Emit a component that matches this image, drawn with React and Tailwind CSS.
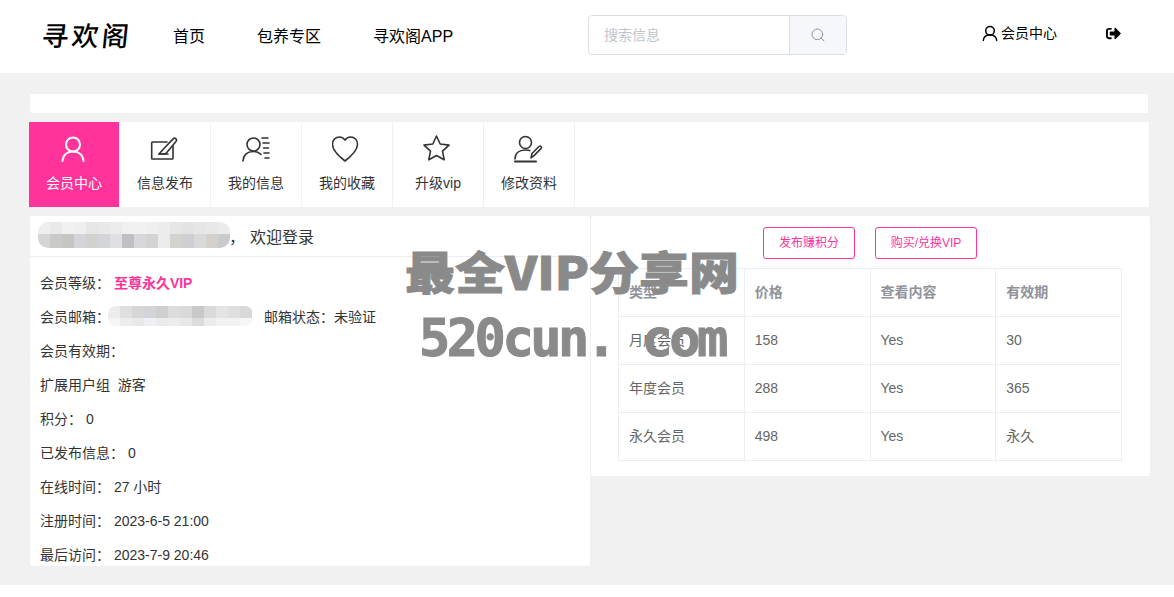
import { Search } from 'lucide-react';
import { FaSignOutAlt } from 'react-icons/fa';

const iconProps = { fill: 'none', stroke: 'currentColor', strokeWidth: 1.6, strokeLinecap: 'round', strokeLinejoin: 'round' };

const UserIcon = () => (
    <svg width="30" height="30" viewBox="0 0 30 30" {...iconProps} strokeWidth="2">
        <circle cx="14" cy="9.500" r="7" />
        <path d="M3.500 26c.5-6 4.500-9.500 10.500-9.500S24 20 24.500 26" />
    </svg>
);

const PostIcon = () => (
    <svg width="30" height="30" viewBox="0 0 30 30" {...iconProps}>
        <path d="M17 7H2.500a.8.800 0 0 0-.8.800v15.400a.8.800 0 0 0 .8.800h19.700a.8.800 0 0 0 .8-.8V11" />
        <path d="M9 19h6.500L26 6.500c.8-1 .7-2-.2-2.800-.9-.8-1.900-.7-2.700.2L13 14.500z" />
        <path d="M9 19h9" />
    </svg>
);

const InfoIcon = () => (
    <svg width="30" height="30" viewBox="0 0 30 30" {...iconProps}>
        <circle cx="12.500" cy="9.500" r="6.500" />
        <path d="M2 26c.5-6 4.500-9.500 10.500-9.500 3 0 5.500 1 7.500 2.800" />
        <path d="M21 3h6M22 8h6M22.500 13h5M23 18h5M24 23h4" />
    </svg>
);

const HeartIcon = () => (
    <svg width="30" height="30" viewBox="0 0 30 30" {...iconProps}>
        <path d="M13 26C6 20.500.5 15.500.5 9.500.5 5 3.500 2 7.500 2c2.500 0 4.300 1.200 5.500 3.200C14.200 3.200 16 2 18.500 2c4 0 7 3 7 7.500C25.500 15.500 20 20.500 13 26z" />
    </svg>
);

const StarIcon = () => (
    <svg width="30" height="30" viewBox="0 0 30 30" {...iconProps}>
        <path d="M13.500 1l3.700 8 8.800 1.100-6.500 6 1.700 8.700-7.700-4.300-7.700 4.300 1.700-8.700-6.500-6L9.800 9z" />
    </svg>
);

const EditUserIcon = () => (
    <svg width="30" height="30" viewBox="0 0 30 30" {...iconProps}>
        <circle cx="11.500" cy="7.500" r="6" />
        <path d="M1 24c0-5.500 4-9 10.500-9 1.500 0 3 .2 4.300.6" />
        <path d="M1 26.500h21" strokeWidth="2" />
        <path d="M17 23l1-4.500 7-7c.7-.7 1.500-.7 2.100 0 .6.600.6 1.400-.1 2.100l-7 7z" />
    </svg>
);

const tabs = [
    { label: '会员中心', Icon: UserIcon, active: true },
    { label: '信息发布', Icon: PostIcon },
    { label: '我的信息', Icon: InfoIcon },
    { label: '我的收藏', Icon: HeartIcon },
    { label: '升级vip', Icon: StarIcon },
    { label: '修改资料', Icon: EditUserIcon },
];

const plans = [
    ['月度会员', '158', 'Yes', '30'],
    ['年度会员', '288', 'Yes', '365'],
    ['永久会员', '498', 'Yes', '永久'],
];

const nameTop = ['#eeeeee', '#e9e9e9', '#f1f1f1', '#efefef', '#e6e6e4', '#e9e9e9', '#ebebeb', '#f0f0f0', '#f1f1f1', '#efefef', '#ececec', '#e5e6e8', '#e3e3e3', '#e6e6e6', '#e8e8e8', '#ebebeb'];
const nameBottom = ['#d5d5d5', '#c9c9c7', '#c5c5c3', '#d4d4d9', '#d3d1cd', '#d3d5d8', '#dfe0e2', '#c0c0c2', '#d8d8da', '#d4d3d3', '#ebebeb', '#d3d2cf', '#cfcfd3', '#d8d9db', '#d4d1cd', '#c9cacd'];
const mailTop = ['#ececec', '#dfdfdf', '#d6d6d6', '#d2d4da', '#d0cfd0', '#dcdcdc', '#d9d9d9', '#c9c9cb', '#d9dbdb', '#e4e4e4', '#dfdfdf', '#d8d8d8'];
const mailBottom = ['#f5f5f5', '#ededed', '#e9e9e9', '#eeeff2', '#eaeaea', '#ededed', '#e8e8e8', '#dcdcdd', '#ececed', '#f2f2f2', '#f2f2f2', '#f7f7f7'];

const Mosaic = ({ top, bottom, className }) => (
    <div className={`absolute flex flex-col overflow-hidden ${className}`}>
        <div className="flex h-[12px] shrink-0">
            {top.map((c, i) => <div key={i} className="w-[12px] shrink-0" style={{ backgroundColor: c }} />)}
        </div>
        <div className="flex flex-1">
            {bottom.map((c, i) => <div key={i} className="w-[12px] shrink-0" style={{ backgroundColor: c }} />)}
        </div>
    </div>
);

const Row = ({ children }) => <div className="h-[34px] flex items-center whitespace-pre">{children}</div>;

const App = () => {
    return (
        <div className="relative h-[597px] overflow-hidden bg-white text-[14px] text-[#333] font-['Liberation_Sans','Noto_Sans_CJK_SC',sans-serif]">
            <header className="h-[73px] flex items-center pl-[42px] text-black">
                <div className="w-[131px] -mt-[5px] text-[27px] leading-none tracking-[3px] font-medium font-['Noto_Sans_CJK_JP',sans-serif] -skew-x-6 whitespace-nowrap">寻欢阁</div>
                <nav className="flex gap-[52px] text-[16px]">
                    <span>首页</span>
                    <span>包养专区</span>
                    <span>寻欢阁APP</span>
                </nav>
                <div className="ml-[135px] w-[259px] h-[40px] -mt-[3px] flex border border-[#dcdfe6] rounded-[4px] overflow-hidden">
                    <div className="flex-1 flex items-center pl-[15px] text-[14px] text-[#c0c4cc]">搜索信息</div>
                    <div className="w-[57px] bg-[#f5f7fa] border-l border-[#dcdfe6] flex items-center justify-center text-[#909399]">
                        <Search size={16} strokeWidth={1.5} />
                    </div>
                </div>
                <div className="ml-[135px] flex items-center -mt-[6px]">
                    <svg width="16" height="17" viewBox="0 0 30 30" {...iconProps} strokeWidth="2.800">
                        <circle cx="15" cy="10" r="8" />
                        <path d="M2.500 28c.5-6 5-10 12.500-10s12 4 12.500 10" />
                    </svg>
                    <span className="ml-[3px]">会员中心</span>
                </div>
                <FaSignOutAlt size={15} className="ml-[49px] -mt-[6px]" />
            </header>

            <main className="h-[512px] bg-[#f1f1f1] pt-[20px] pl-[29px] pr-[24px]">
                <div className="w-[1120px] h-[21px] bg-white rounded-[3px] border border-[#eeeff5]" />

                <div className="mt-[8px] w-[1120px] h-[85px] bg-white flex">
                    {tabs.map(({ label, Icon, active }) => (
                        <div
                            key={label}
                            className={`w-[91px] flex flex-col items-center pt-[13px] border-r border-[#f1f1f1] ${active ? 'bg-[#ff3399] text-white' : 'text-[#333]'}`}
                        >
                            <Icon />
                            <span className="mt-[8px] leading-[20px]">{label}</span>
                        </div>
                    ))}
                </div>

                <div className="mt-[8px] flex items-start w-[1122px]">
                    <section className="relative shrink-0 w-[562px] h-[352px] overflow-hidden bg-white rounded-[3px] border border-[#eeeff5]">
                        <div className="h-[41px] flex items-center border-b border-[#eeeff5] pt-[3px] pl-[199px] text-[16px] whitespace-pre">
                            <span>，</span>
                            <span className="ml-[5px]">欢迎登录</span>
                        </div>
                        <div className="pt-[9px] pl-[10px]">
                            <Row>会员等级： <b className="text-[#ff3399]">至尊永久VIP</b></Row>
                            <Row>
                                会员邮箱：
                                <span className="ml-[154px]">邮箱状态：未验证</span>
                            </Row>
                            <Row>会员有效期：</Row>
                            <Row>扩展用户组  游客</Row>
                            <Row>积分： 0</Row>
                            <Row>已发布信息： 0</Row>
                            <Row>在线时间： 27 小时</Row>
                            <Row>注册时间： 2023-6-5 21:00</Row>
                            <Row>最后访问： 2023-7-9 20:46</Row>
                        </div>
                        <Mosaic top={nameTop} bottom={nameBottom} className="left-[8px] top-[6px] w-[192px] h-[26px] rounded-[10px]" />
                        <Mosaic top={mailTop} bottom={mailBottom} className="left-[78px] top-[90px] w-[145px] h-[20px] rounded-[8px]" />
                    </section>

                    <section className="shrink-0 w-[561px] h-[262px] -ml-px bg-white rounded-[3px] border border-[#eeeff5] pl-[27px]">
                        <div className="h-[52px] flex items-center gap-[20px] pl-[145px] pt-[1px] text-[12px] text-[#ff3399]">
                            <button className="w-[92px] h-[32px] border border-[#ff3399] rounded-[3px]">发布赚积分</button>
                            <button className="w-[102px] h-[32px] border border-[#ff3399] rounded-[3px]">购买/兑换VIP</button>
                        </div>
                        <table className="w-[504px] table-fixed border-collapse text-[#666]">
                            <thead>
                                <tr className="h-[48px] text-[#909399]">
                                    {['类型', '价格', '查看内容', '有效期'].map((h) => (
                                        <th key={h} className="border border-[#ebeef5] px-[10px] text-left font-bold">{h}</th>
                                    ))}
                                </tr>
                            </thead>
                            <tbody>
                                {plans.map((row) => (
                                    <tr key={row[0]} className="h-[48px]">
                                        {row.map((cell, i) => (
                                            <td key={i} className="border border-[#ebeef5] px-[10px]">{cell}</td>
                                        ))}
                                    </tr>
                                ))}
                            </tbody>
                        </table>
                    </section>
                </div>
            </main>

            <div className="absolute left-[405px] top-[240px] w-[340px] pointer-events-none text-[#8a8a8a] select-none [-webkit-text-stroke:1px_#8a8a8a]">
                <div className="text-[50px] leading-[60px] font-black whitespace-nowrap font-['Noto_Sans_CJK_SC',sans-serif] scale-y-90">最全VIP分享网</div>
                <div className="mt-[12px] ml-[14px] text-[52px] leading-[52px] font-bold tracking-[-3.500px] whitespace-pre font-['DejaVu_Sans_Mono',monospace]">520cun. com</div>
            </div>
        </div>
    );
};

export default App;
